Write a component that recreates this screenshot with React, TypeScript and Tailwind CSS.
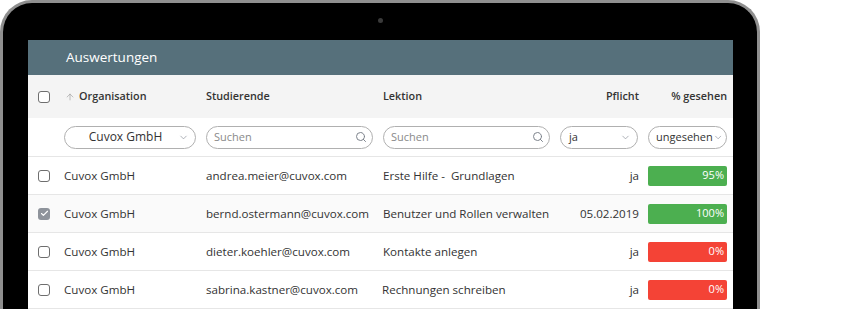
import { ArrowUp, ChevronDown, Search, Check } from "lucide-react";

const rows = [
  { org: "Cuvox GmbH", email: "andrea.meier@cuvox.com", lesson: "Erste Hilfe -  Grundlagen", duty: "ja", pct: 95, checked: false },
  { org: "Cuvox GmbH", email: "bernd.ostermann@cuvox.com", lesson: "Benutzer und Rollen verwalten", duty: "05.02.2019", pct: 100, checked: true },
  { org: "Cuvox GmbH", email: "dieter.koehler@cuvox.com", lesson: "Kontakte anlegen", duty: "ja", pct: 0, checked: false },
  { org: "Cuvox GmbH", email: "sabrina.kastner@cuvox.com", lesson: "Rechnungen schreiben", duty: "ja", pct: 0, checked: false },
];

const cols = "grid grid-cols-[36px_142px_177px_177px_88px_85px]";

function Box({ checked }: { checked: boolean }) {
  if (checked) {
    return (
      <div className="w-[12px] h-[12px] rounded-[3px] bg-[#8e939b] flex items-center justify-center">
        <Check size={9} strokeWidth={3} className="text-white" />
      </div>
    );
  }
  return <div className="w-[12px] h-[12px] rounded-[3px] border-[1.5px] border-[#6e6e6e] bg-white" />;
}

function SearchInput() {
  return (
    <div className="h-[23px] rounded-full border border-[#b0b0b0] flex items-center justify-between pl-[7px] pr-[5px]">
      <span className="text-[11px] text-[#8a8a8a]">Suchen</span>
      <Search size={12} strokeWidth={2} className="text-[#7d838c]" />
    </div>
  );
}

export default function App() {
  return (
    <div className="w-[852px] h-[309px] overflow-hidden bg-white font-['Open_Sans',sans-serif]">
      <div className="w-[760px] h-[320px] rounded-t-[32px] border-[3px] border-b-0 border-[#8f8f8f] bg-black px-[25px] pr-[24px]">
        <div className="h-[37px] flex items-center justify-center">
          <div className="w-[5px] h-[5px] rounded-full bg-[#3a3a3a] mt-[-3px]" />
        </div>
        <div className="w-[705px] bg-white h-[280px]">
          <div className="h-[35px] bg-[#56707b] flex items-center pl-[38px]">
            <span className="text-white text-[13.5px]">Auswertungen</span>
          </div>
          <div className={`${cols} h-[43px] bg-[#f4f4f4] items-center text-[10.8px] font-semibold text-[#333]`}>
            <div className="pl-[10px]"><Box checked={false} /></div>
            <div className="flex items-center gap-[4px] pl-[1px]">
              <ArrowUp size={10} strokeWidth={1.5} className="text-[#9a9a9a]" />
              <span>Organisation</span>
            </div>
            <div>Studierende</div>
            <div>Lektion</div>
            <div className="text-right pr-[9px]">Pflicht</div>
            <div className="text-right pr-[6px]">% gesehen</div>
          </div>
          <div className={`${cols} h-[39px] items-center border-b border-[#e6e6e6]`}>
            <div />
            <div className="pr-[10px]">
              <div className="h-[23px] rounded-full border border-[#b0b0b0] flex items-center pl-[8px] pr-[6px]">
                <span className="flex-1 text-center text-[12px] text-[#333]">Cuvox GmbH</span>
                <ChevronDown size={11} strokeWidth={1.5} className="text-[#8a8f99]" />
              </div>
            </div>
            <div className="pr-[10px]"><SearchInput /></div>
            <div className="pr-[10px]"><SearchInput /></div>
            <div className="pr-[10px]">
              <div className="h-[23px] rounded-full border border-[#b0b0b0] flex items-center justify-between pl-[8px] pr-[6px]">
                <span className="text-[11px] text-[#333]">ja</span>
                <ChevronDown size={11} strokeWidth={1.5} className="text-[#8a8f99]" />
              </div>
            </div>
            <div className="pr-[6px]">
              <div className="h-[23px] rounded-full border border-[#b0b0b0] flex items-center justify-between pl-[7px] pr-[3px]">
                <span className="text-[11px] text-[#333]">ungesehen</span>
                <ChevronDown size={11} strokeWidth={1.5} className="text-[#8a8f99]" />
              </div>
            </div>
          </div>
          {rows.map((r, i) => (
            <div
              key={i}
              className={`${cols} h-[38px] items-center border-b border-[#e6e6e6] text-[11.6px] text-[#333] ${i === 1 ? "bg-[#fafafa]" : "bg-white"}`}
            >
              <div className="pl-[10px]"><Box checked={r.checked} /></div>
              <div>{r.org}</div>
              <div>{r.email}</div>
              <div className={`whitespace-pre ${i === 3 ? "ml-[-1px]" : ""}`}>{r.lesson}</div>
              <div className="text-right pr-[9px]">{r.duty}</div>
              <div className="pr-[6px]">
                <div
                  className={`h-[20px] rounded-[2px] flex items-center justify-end pr-[3px] text-[11px] text-white ${r.pct > 0 ? "bg-[#4caf50]" : "bg-[#f44336]"}`}
                >
                  {r.pct}%
                </div>
              </div>
            </div>
          ))}
        </div>
      </div>
    </div>
  );
}
